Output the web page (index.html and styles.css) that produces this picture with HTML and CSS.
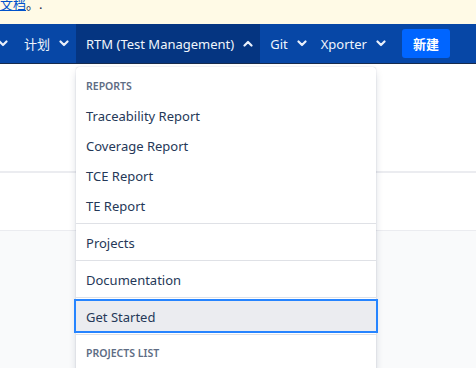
FILE: index.html
```html
<!DOCTYPE html>
<html lang="zh-CN">

<head>
    <meta charset="UTF-8">
    <meta name="viewport" content="width=device-width, initial-scale=1.0">
    <title>RTM (Test Management)</title>
    <link rel="stylesheet" href="styles.css">
</head>

<body>
    <div class="banner">
        <p><a href="#">文档</a>。.</p>
    </div>

    <nav class="topnav">
        <div class="nav-item cut">
            <svg class="chev" viewBox="0 0 10 7"><polyline points="1.5,1.5 5,5 8.5,1.5"/></svg>
        </div>
        <div class="nav-item">
            <span>计划</span>
            <svg class="chev" viewBox="0 0 10 7"><polyline points="1.5,1.5 5,5 8.5,1.5"/></svg>
        </div>
        <div class="nav-item active">
            <span>RTM (Test Management)</span>
            <svg class="chev" viewBox="0 0 10 7"><polyline points="1.5,5.5 5,2 8.5,5.5"/></svg>

            <div class="dropdown">
                <div class="group">
                    <div class="group-title">Reports</div>
                    <a class="item" href="#">Traceability Report</a>
                    <a class="item" href="#">Coverage Report</a>
                    <a class="item" href="#">TCE Report</a>
                    <a class="item" href="#">TE Report</a>
                </div>
                <div class="group single">
                    <a class="item" href="#">Projects</a>
                </div>
                <div class="group single">
                    <a class="item" href="#">Documentation</a>
                </div>
                <div class="group single">
                    <a class="item focused" href="#">Get Started</a>
                </div>
                <div class="group last">
                    <div class="group-title">Projects list</div>
                </div>
            </div>
        </div>
        <div class="nav-item tight">
            <span>Git</span>
            <svg class="chev" viewBox="0 0 10 7"><polyline points="1.5,1.5 5,5 8.5,1.5"/></svg>
        </div>
        <div class="nav-item">
            <span>Xporter</span>
            <svg class="chev" viewBox="0 0 10 7"><polyline points="1.5,1.5 5,5 8.5,1.5"/></svg>
        </div>
        <button class="create">新建</button>
    </nav>

    <div class="page">
        <div class="page-head"></div>
        <div class="page-bar"></div>
        <div class="page-body"></div>
    </div>
</body>

</html>
```

FILE: styles.css
```css
body {
    margin: 0;
    font-family: "Noto Sans", "Noto Sans CJK SC", sans-serif;
    font-size: 13px;
    color: #172b4d;
    overflow: hidden;
}

.banner {
    height: 24px;
    background: #fffae6;
    overflow: hidden;
}

.banner p {
    margin: -5px 0 0;
    font-size: 13px;
    line-height: 18px;
    color: #172b4d;
}

.banner a {
    color: #0052cc;
}

.topnav {
    display: flex;
    align-items: center;
    height: 39px;
    background: #0747a6;
    border-bottom: 1px solid #172b4d;
}

.nav-item {
    position: relative;
    flex-shrink: 0;
    display: flex;
    align-items: center;
    gap: 9px;
    height: 100%;
    padding: 0 7px 0 10px;
    color: #f0f5fc;
    white-space: nowrap;
}

.nav-item.cut {
    padding: 0 6px 0 0;
    margin-left: -2px;
}

.nav-item.tight {
    padding-right: 4px;
}

.nav-item.active {
    background: #053581;
}

.chev {
    width: 10px;
    height: 7px;
    fill: none;
    stroke: #e9f0fb;
    stroke-width: 2.2;
    stroke-linecap: round;
    stroke-linejoin: round;
}

.create {
    flex-shrink: 0;
    margin-left: 9px;
    height: 29px;
    padding: 0 11px;
    border: none;
    border-radius: 3px;
    background: #0065ff;
    color: #fff;
    font-family: "Noto Sans CJK SC", sans-serif;
    font-size: 13px;
    font-weight: 700;
    white-space: nowrap;
}

.dropdown {
    position: absolute;
    top: 43px;
    left: 0;
    width: 300px;
    background: #fff;
    border-radius: 3px;
    box-shadow: 0 4px 8px -2px rgba(9, 30, 66, 0.25), 0 0 1px rgba(9, 30, 66, 0.31);
    z-index: 10;
}

.group {
    padding: 0 0 2px;
    border-bottom: 1px solid #dfe1e6;
}

.group.single {
    padding: 3px 0;
}

.group.last {
    border-bottom: none;
    padding-bottom: 12px;
}

.group-title {
    padding: 11px 10px 7px;
    font-size: 10.5px;
    line-height: 16px;
    font-weight: 600;
    text-transform: uppercase;
    color: #5e6c84;
}

.group.last .group-title {
    padding-top: 10px;
}

.item {
    display: block;
    height: 30px;
    line-height: 30px;
    padding: 0 10px;
    color: #253858;
    text-decoration: none;
}

.group.single .item {
    line-height: 32px;
}

.item.focused {
    background: #ebecf0;
    outline: 2px solid #2684ff;
}

.page-head {
    height: 107px;
    background: #fff;
    border-bottom: 2px solid #ebecf0;
}

.page-bar {
    height: 57px;
    background: #fff;
    border-bottom: 1px solid #ebecf0;
}

.page-body {
    height: 200px;
    background: #f9fafb;
}
```
